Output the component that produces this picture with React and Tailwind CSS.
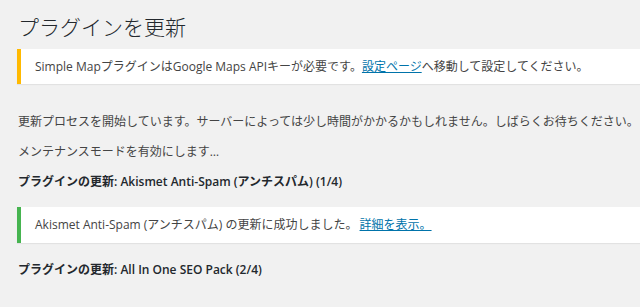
export default function App() {
  const font = { fontFamily: '"Open Sans", "Noto Sans CJK JP", sans-serif' };
  return (
    <div
      className="w-[640px] h-[307px] overflow-hidden bg-[#f1f1f1] text-[#444] pl-[17px] pt-[13px]"
      style={font}
    >
      <h1 className="h-[28px] leading-[28px] text-[21px] font-light text-[#23282d] pl-px">
        プラグインを更新
      </h1>

      <div className="mt-[8px] h-[35px] w-[700px] flex items-center bg-white border-l-4 border-[#ffb900] pl-[14px] text-[12px] shadow-[0_1px_1px_rgba(0,0,0,0.06)] whitespace-nowrap">
        Simple Mapプラグインは<span>Google Maps API</span>キーが必要です。
        <a href="#" className="text-[#0073aa] underline">
          設定ページ
        </a>
        へ移動して設定してください。
      </div>

      <p className="mt-[28px] h-[20px] leading-[20px] text-[12px] pl-px whitespace-nowrap">
        更新プロセスを開始しています。サーバーによっては少し時間がかかるかもしれません。しばらくお待ちください。
      </p>
      <p className="mt-[10px] h-[20px] leading-[20px] text-[12px] pl-px whitespace-nowrap">
        メンテナンスモードを有効にします…
      </p>
      <p className="mt-[10px] h-[20px] leading-[20px] text-[12px] pl-px font-semibold text-[#23282d] whitespace-nowrap">
        プラグインの更新: Akismet Anti-Spam (アンチスパム) (1/4)
      </p>

      <div className="mt-[15px] h-[36px] w-[700px] flex items-center bg-white border-l-4 border-[#46b450] pl-[14px] text-[12px] shadow-[0_1px_1px_rgba(0,0,0,0.06)] whitespace-nowrap">
        Akismet Anti-Spam (アンチスパム) の更新に成功しました。
        <a href="#" className="ml-[2px] text-[#0073aa] underline">
          詳細を表示。
        </a>
      </div>

      <p className="mt-[17px] h-[20px] leading-[20px] text-[12px] pl-px font-semibold text-[#23282d] whitespace-nowrap">
        プラグインの更新: All In One SEO Pack (2/4)
      </p>
    </div>
  );
}
